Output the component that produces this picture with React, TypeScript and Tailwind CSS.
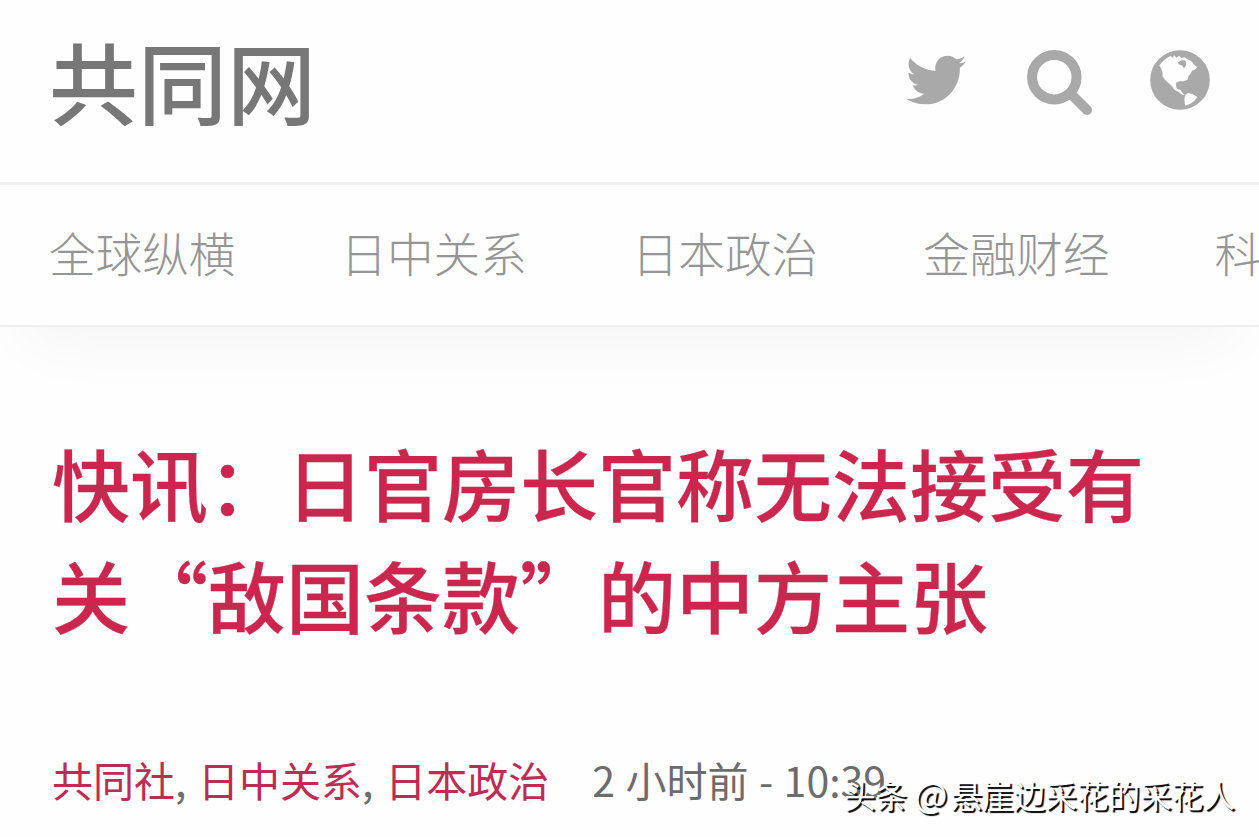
import { FaTwitter } from "react-icons/fa";

const categories = ["全球纵横", "日中关系", "日本政治", "金融财经", "科技"];
const tags = ["共同社", "日中关系", "日本政治"];

function SearchIcon() {
  return (
    <svg viewBox="0 0 65 66" className="mr-[58px] h-[66px] w-[65px]" fill="none" stroke="currentColor">
      <circle cx="27.3" cy="27.2" r="22.2" strokeWidth="10" />
      <path d="M44.5 44.5 60 60" strokeWidth="10" strokeLinecap="round" />
    </svg>
  );
}

function GlobeIcon() {
  return (
    <svg viewBox="0 0 180 180" className="size-[60px]">
      <circle cx="90" cy="90" r="89.5" fill="currentColor" />
      {/* North America */}
      <path
        fill="#fefefe"
        d="M28 46 38 34 54 22 63 18 67 24 73 16 79 24 87 17 94 24 103 22 113 28 125 34 131 43 142 51 134 59 126 62 122 71 115 79 113 89 100 94 91 94 84 99 79 106 81 116 92 120 98 130 105 135 98 135 86 126 74 120 66 109 55 99 46 90 38 80 37 67 34 56Z"
      />
      {/* South America */}
      <path fill="#fefefe" d="M106 134 114 129 127 132 142 141 133 153 120 162 105 167 103 148Z" />
      {/* Hudson Bay and the gulf */}
      <path fill="currentColor" d="M84 37 96 30 107 32 108 46 102 55 97 47 86 43Z" />
      <path fill="currentColor" d="M78 98 90 94 102 98 101 112 92 118 80 114Z" />
    </svg>
  );
}

export default function App() {
  return (
    <main className="relative h-[837px] w-[1259px] overflow-hidden bg-[#fefefe] font-['Noto_Sans_CJK_SC',sans-serif]">
      <header className="flex h-[185px] items-start justify-between border-b-[3px] border-[#f0f0f0] pr-[49px] pl-[49px]">
        <h1 className="mt-[15px] text-[89px] leading-[130px] font-medium text-[#777]">共同网</h1>
        <div className="mt-[50px] flex text-[#a9a9a9]">
          <FaTwitter className="mr-[61px] size-[60px]" />
          <SearchIcon />
          <GlobeIcon />
        </div>
      </header>

      <nav className="flex h-[142px] items-center gap-[105px] overflow-hidden border-b-2 border-[#eee] pb-[7px] pl-[49px] text-[46.6px] font-light whitespace-nowrap text-[#959595] shadow-[0_36px_70px_-30px_rgba(0,0,0,0.055)]">
        {categories.map((name) => (
          <a key={name}>{name}</a>
        ))}
      </nav>

      <article className="px-[52px] pt-[99px]">
        <h2 className="text-[78px] leading-[112px] font-medium whitespace-nowrap text-[#cb264e] [-webkit-text-stroke:0.3px_#cb264e]">
          快讯：日官房长官称无法接受有
          <br />
          关“敌国条款”的中方主张
        </h2>
        <div className="mt-[99px] flex text-[41px] leading-[60px] whitespace-nowrap text-[#6c6c6c]">
          <p className="[word-spacing:2.5px]">
            {tags.map((tag, i) => (
              <span key={tag}>
                {i > 0 && ", "}
                <a className="text-[#bd2c52]">{tag}</a>
              </span>
            ))}
          </p>
          <time className="ml-[43px] [word-spacing:1.3px]">2 小时前 - 10:39</time>
        </div>
      </article>

      <div className="absolute top-[771px] left-[844px] text-[31.6px] leading-[46px] whitespace-nowrap text-white [text-shadow:2px_2px_1px_#000]">
        头条 <span className="mr-[3px] text-[35px] leading-none">@</span>悬崖边采花的采花人
      </div>
    </main>
  );
}
